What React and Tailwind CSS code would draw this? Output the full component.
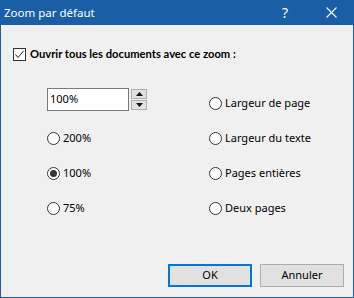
export default function App() {
  return (
    <div className="w-[354px] h-[298px] flex flex-col bg-[#1a5ea6] px-[1px] pb-[1px] font-['Noto_Sans','Liberation_Sans',sans-serif] text-[11px] text-black">
      {/* title bar */}
      <div className="h-[25px] flex items-center text-white -mx-[1px]">
        <div className="pl-[4px] flex-1 leading-none text-[11.5px]">Zoom par défaut</div>
        <div className="w-[46px] h-full flex items-center justify-center text-[14px]">?</div>
        <div className="w-[46px] h-full flex items-center justify-center">
          <svg width="11" height="11" viewBox="0 0 11 11">
            <path d="M0.5 0.5 L10.5 10.5 M10.5 0.5 L0.5 10.5" stroke="white" strokeWidth="1.1" />
          </svg>
        </div>
      </div>

      <div className="flex-1 flex flex-col bg-[#f0f0f0]">
        {/* open with zoom */}
        <label className="mt-[23px] ml-[12px] flex items-center h-[13px] gap-[4px]">
          <span className="w-[13px] h-[13px] border border-[#333] bg-white flex items-center justify-center">
            <svg width="11" height="11" viewBox="0 0 11 11">
              <path d="M1.5 5.5 L4 8.5 L9.5 2" fill="none" stroke="#222" strokeWidth="1" />
            </svg>
          </span>
          <span className="font-bold font-['Lato','Noto_Sans',sans-serif] text-[11.2px]">Ouvrir tous les documents avec ce zoom :</span>
        </label>

        <div className="mt-[25px] ml-[46px] grid grid-cols-[162px_1fr] auto-rows-[35px] items-center">
          <div className="self-start mt-[2px] flex gap-[2px]">
            <div className="w-[82px] h-[23px] border border-[#7a7a7a] bg-white flex items-center pl-[2px]">100%</div>
            <div className="flex flex-col gap-[1px] mt-[1px]">
              <Spin up />
              <Spin />
            </div>
          </div>
          <Radio label="Largeur de page" />
          <Radio label="200%" />
          <Radio label="Largeur du texte" />
          <Radio label="100%" checked />
          <Radio label="Pages entières" />
          <Radio label="75%" />
          <Radio label="Deux pages" />
        </div>

        <div className="flex-1" />
        <div className="flex justify-end gap-[8px] mr-[9px] mb-[10px]">
          <button className="w-[84px] h-[23px] border-2 border-[#0078d7] bg-[#e1e1e1]">OK</button>
          <button className="w-[84px] h-[23px] border border-[#adadad] bg-[#e1e1e1]">Annuler</button>
        </div>
      </div>
    </div>
  )
}

function Spin({ up }) {
  return (
    <div className="w-[16px] h-[10px] border border-[#adadad] bg-[#e1e1e1] flex items-center justify-center">
      <svg width="7" height="4" viewBox="0 0 7 4">
        <path d={up ? 'M0 4 L3.5 0 L7 4 Z' : 'M0 0 L7 0 L3.5 4 Z'} fill="#111" />
      </svg>
    </div>
  )
}

function Radio({ label, checked }) {
  return (
    <label className="flex items-center h-[13px] gap-[3px]">
      <span className="w-[13px] h-[13px] rounded-full border border-[#333] bg-white flex items-center justify-center">
        {checked && <span className="w-[7px] h-[7px] rounded-full bg-[#333]" />}
      </span>
      <span>{label}</span>
    </label>
  )
}
